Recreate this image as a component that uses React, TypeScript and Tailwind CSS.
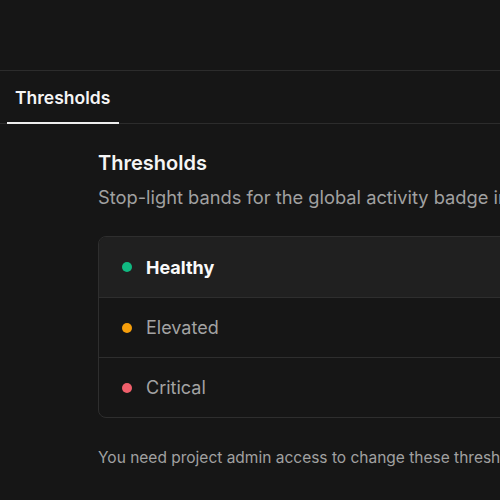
import { useState } from "react";

const bands = [
  { id: "healthy", label: "Healthy", dot: "bg-[#10b981]" },
  { id: "elevated", label: "Elevated", dot: "bg-[#f59e0b]" },
  { id: "critical", label: "Critical", dot: "bg-[#f05f6b]" },
];

export default function App() {
  const [active, setActive] = useState("healthy");

  return (
    <div className="min-h-[500px] w-[500px] overflow-hidden bg-[#161616] text-[#ededed] font-['Inter',sans-serif]">
      {/* Top bar */}
      <div className="h-[71px] border-b border-[#2c2c2c]" />

      {/* Tabs */}
      <div className="flex border-b border-[#2c2c2c] px-[7px]">
        <button className="-mb-px border-b-2 border-[#ededed] pl-2 pr-[9px] pt-[17px] pb-[14px] text-[17.5px] font-semibold leading-5 text-[#f5f5f5]">
          Thresholds
        </button>
      </div>

      {/* Content */}
      <div className="w-[900px] pl-[98px] pt-[25px]">
        <h2 className="text-[20px] font-semibold leading-7 text-[#f5f5f5]">Thresholds</h2>
        <p className="mt-[8px] whitespace-nowrap text-[18.3px] leading-6 text-[#a1a1a1]">
          Stop-light bands for the global activity badge in the project header and dashboards.
        </p>

        <div className="mt-[27px] overflow-hidden rounded-lg border border-[#2e2e2e]">
          {bands.map((b, i) => (
            <button
              key={b.id}
              onClick={() => setActive(b.id)}
              className={`flex h-[60px] w-full items-center gap-[14px] pl-[23px] text-left text-[18px] ${
                i > 0 ? "border-t border-[#2e2e2e]" : ""
              } ${active === b.id ? "bg-[#202020] font-bold text-[#fafafa]" : "text-[#a3a3a3]"}`}
            >
              <span className={`h-[10px] w-[10px] rounded-full ${b.dot}`} />
              {b.label}
            </button>
          ))}
        </div>

        <p className="mt-[28px] whitespace-nowrap text-[15.5px] text-[#a1a1a1]">
          You need project admin access to change these thresholds.
        </p>
      </div>
    </div>
  );
}
